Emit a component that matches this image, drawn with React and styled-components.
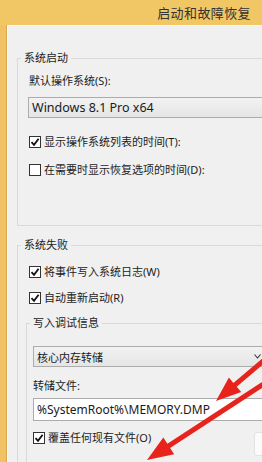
import React from "react";
import styled, { createGlobalStyle } from "styled-components";

const Global = createGlobalStyle`
  html, body { margin: 0; padding: 0; background: #f0f0f0; }
  body { width: 262px; height: 462px; overflow: hidden; }
  * { box-sizing: border-box; }
`;

const FONT = `"Noto Sans", "Noto Sans CJK SC", sans-serif`;

const Window = styled.div`
  position: relative;
  width: 262px;
  height: 462px;
  display: flex;
  flex-direction: column;
  font-family: ${FONT};
  font-size: 11px;
  color: #1c1c1c;
  overflow: hidden;
`;

const TitleBar = styled.div`
  height: 25px;
  flex: none;
  background: #f1c664;
  display: flex;
  align-items: center;
  justify-content: flex-end;
  padding-right: 11px;
  font-size: 13px;
  color: #333333;
  letter-spacing: 0.4px;
`;

const Main = styled.div`
  flex: 1;
  display: flex;
  min-height: 0;
`;

const Frame = styled.div`
  width: 7px;
  flex: none;
  background: #f0c265;
  border-right: 1px solid #dca84a;
`;

const Panel = styled.div`
  flex: 1;
  min-width: 0;
  background: #f0f0f0;
  border-left: 1px solid #fafafa;
  border-top: 1px solid #f8f8f8;
  padding: 24px 0 0 9px;
  overflow: hidden;
  display: flex;
  flex-direction: column;
`;

const Group = styled.fieldset`
  margin: ${(p) => p.$mt || 0}px -60px 0 ${(p) => p.$ml || 0}px;
  padding: 0 0 ${(p) => p.$pb || 0}px 0;
  border: 1px solid #d9d9d9;
  min-width: 0;
  flex: none;
`;

const Legend = styled.legend`
  margin-left: 3px;
  padding: 0 3px;
  line-height: 16px;
  font-size: 11px;
  color: #1c1c1c;
`;

const GroupBody = styled.div`
  display: flex;
  flex-direction: column;
  align-items: flex-start;
  padding-left: ${(p) => p.$pl}px;
`;

const Label = styled.div`
  line-height: 16px;
  margin-top: ${(p) => p.$mt}px;
`;

const Combo = styled.div`
  margin: ${(p) => p.$mt}px 0 0 ${(p) => p.$ml || 0}px;
  width: ${(p) => p.$w}px;
  height: 21px;
  border: 1px solid #acacac;
  background: linear-gradient(#f2f2f2, #e5e5e5);
  display: flex;
  align-items: center;
  justify-content: space-between;
  padding: 0 7px 0 3px;
  font-size: ${(p) => p.$fs || 11}px;
  color: #1a1a1a;
`;

const ComboArrow = styled.svg`
  width: 7px;
  height: 5px;
  flex: none;
`;

const TextBox = styled.div`
  margin-top: ${(p) => p.$mt}px;
  width: 260px;
  height: 23px;
  border: 1px solid #acacac;
  background: #ffffff;
  display: flex;
  align-items: center;
  padding-left: 3px;
  font-size: 12px;
  color: #1a1a1a;
`;

const CheckRow = styled.div`
  margin-top: ${(p) => p.$mt}px;
  display: flex;
  align-items: center;
  gap: 3px;
  line-height: 16px;
`;

const Box = styled.span`
  width: 12px;
  height: 12px;
  border: 1px solid #333333;
  background: #ffffff;
  display: flex;
  align-items: center;
  justify-content: center;
  flex: none;
`;

const Overlay = styled.svg`
  position: absolute;
  left: 0;
  top: 0;
  width: 262px;
  height: 462px;
  pointer-events: none;
`;

const ButtonEdge = styled.div`
  position: absolute;
  left: 254px;
  top: 432px;
  width: 20px;
  height: 24px;
  background: #fbfbfb;
  border: 1px solid #e2e2e2;
  border-radius: 3px;
`;

function Check({ checked, label, mt }) {
  return (
    <CheckRow $mt={mt}>
      <Box>
        {checked && (
          <svg width="10" height="10" viewBox="0 0 10 10">
            <path d="M1.5 5.2 L4 7.8 L8.6 1.8" fill="none" stroke="#111" strokeWidth="1.8" />
          </svg>
        )}
      </Box>
      <span>{label}</span>
    </CheckRow>
  );
}

function arrowPoints(x1, y1, x2, y2, w, L, W) {
  const dx = x2 - x1;
  const dy = y2 - y1;
  const len = Math.hypot(dx, dy);
  const ux = dx / len;
  const uy = dy / len;
  const nx = -uy;
  const ny = ux;
  const bx = x2 - ux * L;
  const by = y2 - uy * L;
  const pts = [
    [x1 + (nx * w) / 2, y1 + (ny * w) / 2],
    [bx + (nx * w) / 2, by + (ny * w) / 2],
    [bx + (nx * W) / 2, by + (ny * W) / 2],
    [x2, y2],
    [bx - (nx * W) / 2, by - (ny * W) / 2],
    [bx - (nx * w) / 2, by - (ny * w) / 2],
    [x1 - (nx * w) / 2, y1 - (ny * w) / 2],
  ];
  return pts.map((p) => p.map((v) => v.toFixed(1)).join(",")).join(" ");
}

export default function App() {
  return (
    <Window>
      <Global />
      <TitleBar>启动和故障恢复</TitleBar>
      <Main>
        <Frame />
        <Panel>
          <Group $pb={47}>
            <Legend>系统启动</Legend>
            <GroupBody $pl={11}>
              <Label $mt={7}>默认操作系统(S):</Label>
              <Combo $mt={8} $ml={-1} $w={280} $fs={12.5}>
                <span>Windows 8.1 Pro x64</span>
              </Combo>
              <Check checked mt={16} label="显示操作系统列表的时间(T):" />
              <Check mt={12} label="在需要时显示恢复选项的时间(D):" />
            </GroupBody>
          </Group>
          <Group $mt={11} $pb={80}>
            <Legend>系统失败</Legend>
            <GroupBody $pl={11}>
              <Check checked mt={11} label="将事件写入系统日志(W)" />
              <Check checked mt={10} label="自动重新启动(R)" />
            </GroupBody>
            <Group $mt={9} $ml={8} $pb={60}>
              <Legend>写入调试信息</Legend>
              <GroupBody $pl={6}>
                <Combo $mt={15} $w={236}>
                  <span>核心内存转储</span>
                  <ComboArrow viewBox="0 0 7 5">
                    <path d="M0.5 0.5 L3.5 4 L6.5 0.5" fill="none" stroke="#333" strokeWidth="1.1" />
                  </ComboArrow>
                </Combo>
                <Label $mt={11}>转储文件:</Label>
                <TextBox $mt={4}>%SystemRoot%\MEMORY.DMP</TextBox>
                <Check checked mt={9} label="覆盖任何现有文件(O)" />
              </GroupBody>
            </Group>
          </Group>
        </Panel>
      </Main>
      <ButtonEdge />
      <Overlay viewBox="0 0 262 462">
        <polygon points={arrowPoints(282, 345, 216, 401, 5, 25, 19)} fill="#e8231c" />
        <polygon points={arrowPoints(282, 372, 147, 460, 5, 26, 20)} fill="#e8231c" />
      </Overlay>
    </Window>
  );
}
